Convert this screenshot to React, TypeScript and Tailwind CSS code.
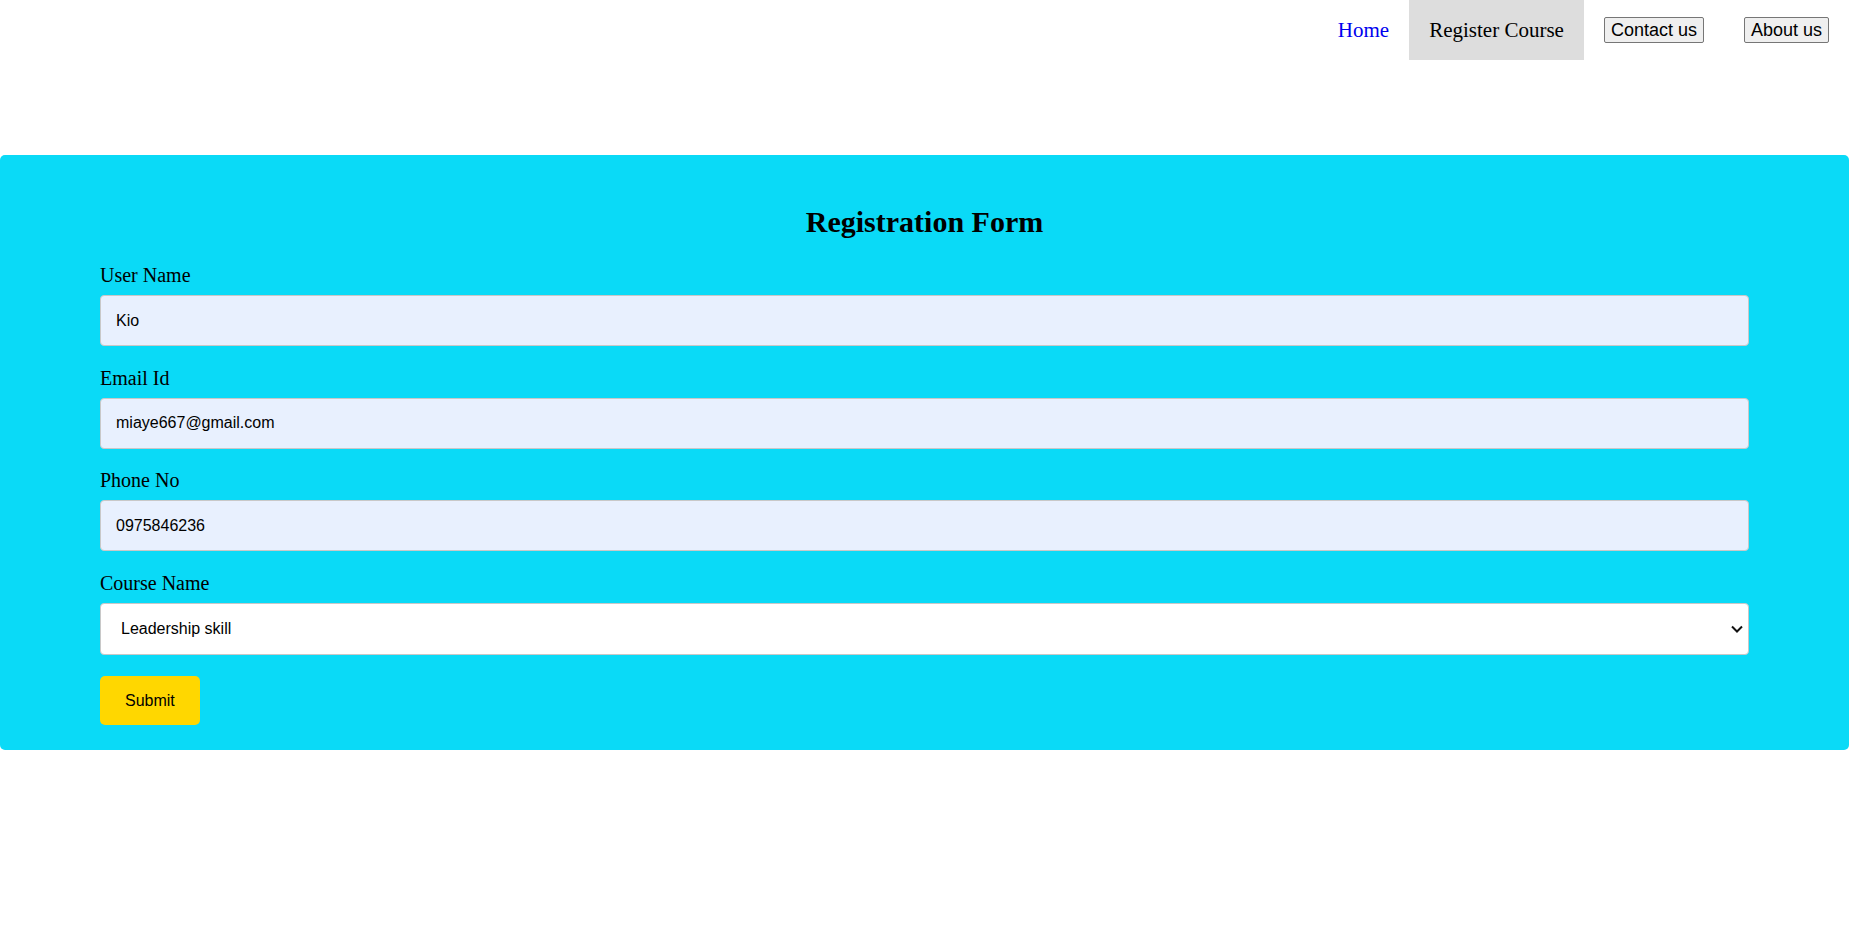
import React from "react";

function Field({ label, value }: { label: string; value: string }) {
  return (
    <div className="flex w-full flex-col">
      <label className="mb-[8px] font-['Liberation_Serif',serif] text-[20px] leading-[23px] text-black">
        {label}
      </label>
      <input
        type="text"
        defaultValue={value}
        className="h-[51px] w-full rounded-[4px] border border-[#c8c8c8] bg-[#e8f0fe] px-[15px] font-['Liberation_Sans',Arial,sans-serif] text-[16px] text-black outline-none"
      />
    </div>
  );
}

export default function App() {
  return (
    <div className="flex min-h-screen w-full flex-col bg-white">
      <nav className="flex h-[60px] w-full items-stretch justify-end">
        <a className="flex items-center px-[20px] font-['Liberation_Serif',serif] text-[21px] leading-[24px] text-[#0000ee]">
          Home
        </a>
        <a className="flex items-center bg-[#dddddd] px-[20px] font-['Liberation_Serif',serif] text-[21px] leading-[24px] text-black">
          Register Course
        </a>
        <div className="flex items-center px-[20px]">
          <button className="h-[26px] rounded-[2px] border border-[#767676] bg-[#efefef] px-[6px] font-['Liberation_Sans',Arial,sans-serif] text-[18px] leading-[20px] text-black">
            Contact us
          </button>
        </div>
        <div className="flex items-center px-[20px]">
          <button className="h-[26px] rounded-[2px] border border-[#767676] bg-[#efefef] px-[6px] font-['Liberation_Sans',Arial,sans-serif] text-[18px] leading-[20px] text-black">
            About us
          </button>
        </div>
      </nav>

      <div className="mt-[95px] flex w-full flex-col rounded-[5px] bg-[#0adaf7] px-[100px] pt-[50px] pb-[25px]">
        <h2 className="mb-[25px] text-center font-['Liberation_Serif',serif] text-[30px] font-bold leading-[34px] text-black">
          Registration Form
        </h2>
        <div className="flex flex-col gap-[20.7px]">
          <Field label="User Name" value="Kio" />
          <Field label="Email Id" value="miaye667@gmail.com" />
          <Field label="Phone No" value="0975846236" />
          <div className="flex w-full flex-col">
            <label className="mb-[8px] font-['Liberation_Serif',serif] text-[20px] leading-[23px] text-black">
              Course Name
            </label>
            <div className="relative w-full">
              <select
                defaultValue="Leadership skill"
                className="h-[52px] w-full appearance-none rounded-[4px] border border-[#c8c8c8] bg-white pl-[20px] pr-[40px] font-['Liberation_Sans',Arial,sans-serif] text-[16px] text-black outline-none"
              >
                <option>Leadership skill</option>
                <option>Communication skill</option>
                <option>Time management</option>
              </select>
              <svg
                className="pointer-events-none absolute right-[6px] top-[22px]"
                width="12"
                height="9"
                viewBox="0 0 12 9"
              >
                <path d="M1 1.5 L6 6.5 L11 1.5" fill="none" stroke="#111" strokeWidth="2" />
              </svg>
            </div>
          </div>
        </div>
        <div className="mt-[21px]">
          <button className="h-[49px] rounded-[5px] bg-[#ffd700] px-[25px] font-['Liberation_Sans',Arial,sans-serif] text-[16px] text-black">
            Submit
          </button>
        </div>
      </div>
    </div>
  );
}
